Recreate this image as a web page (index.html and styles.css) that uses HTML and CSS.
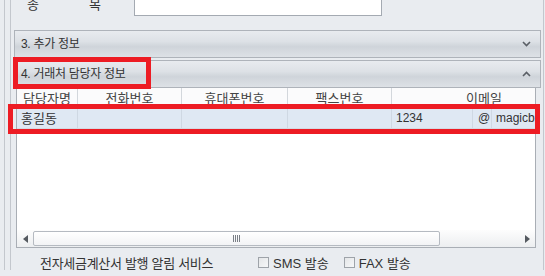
FILE: index.html
```html
<!DOCTYPE html>
<html lang="ko">
<head>
    <meta charset="UTF-8">
    <title>거래처 담당자 정보</title>
    <link rel="stylesheet" href="styles.css">
</head>
<body>
    <div class="window">
        <div class="frame">
            <div class="panel">
                <div class="field-row">
                    <span class="field-label first">종</span>
                    <span class="field-label">목</span>
                    <div class="field-input"></div>
                </div>

                <div class="section">
                    <span class="section-title">3. 추가 정보</span>
                    <svg class="chevron" width="9" height="6" viewBox="0 0 9 6">
                        <path d="M1 1 L4.5 4.5 L8 1" fill="none" stroke="#5a5f66" stroke-width="1.6"/>
                    </svg>
                </div>

                <div class="section open">
                    <span class="section-title">4. 거래처 담당자 정보</span>
                    <svg class="chevron" width="9" height="6" viewBox="0 0 9 6">
                        <path d="M1 5 L4.5 1.5 L8 5" fill="none" stroke="#5a5f66" stroke-width="1.6"/>
                    </svg>
                    <div class="mark mark-title"></div>
                </div>

                <div class="grid">
                    <div class="grid-head">
                        <div class="cell c-name">담당자명</div>
                        <div class="cell c-tel">전화번호</div>
                        <div class="cell c-mobile">휴대폰번호</div>
                        <div class="cell c-fax">팩스번호</div>
                        <div class="cell c-mail">이메일</div>
                    </div>
                    <div class="grid-row">
                        <div class="cell c-name">홍길동</div>
                        <div class="cell c-tel"></div>
                        <div class="cell c-mobile"></div>
                        <div class="cell c-fax"></div>
                        <div class="cell c-mail-id">1234</div>
                        <div class="cell c-at">@</div>
                        <div class="cell c-domain">magicbiz.co.kr</div>
                        <div class="mark mark-row"></div>
                    </div>
                    <div class="grid-body"></div>
                    <div class="hscroll">
                        <span class="arrow left"></span>
                        <div class="thumb"><span class="grip"></span></div>
                        <span class="arrow right"></span>
                    </div>
                </div>

                <div class="notify">
                    <span class="notify-label">전자세금계산서 발행 알림 서비스</span>
                    <label class="check"><span class="box"></span>SMS 발송</label>
                    <label class="check"><span class="box"></span>FAX 발송</label>
                </div>
            </div>
        </div>
    </div>
</body>
</html>
```

FILE: styles.css
```css
body {
    margin: 0;
    font-family: "Liberation Sans", "Noto Sans CJK KR", sans-serif;
    font-size: 12px;
    color: #333;
    background: #e9ecf0;
}
.window {
    width: 545px;
    height: 276px;
    overflow: hidden;
    background: #e9ecf0;
}
.frame {
    margin: 0 1px 0 4px;
    border-left: 1px solid #c3c7cd;
    border-right: 1px solid #c3c7cd;
    padding-left: 5px;
    height: 276px;
}
.panel {
    border-left: 1px solid #c3c7cd;
    padding: 0 2px 0 3px;
    height: 276px;
}

/* 종목 row (partly scrolled off) */
.field-row {
    display: flex;
    align-items: center;
    height: 22px;
    margin-top: -6px;
}
.field-label {
    width: 62px;
    line-height: 14px;
    font-size: 13px;
}
.field-label.first {
    padding-left: 13px;
}
.field-input {
    margin-left: -17px;
    width: 246px;
    height: 20px;
    background: #fff;
    border: 1px solid #a4aab2;
}

/* collapsible headers */
.section {
    position: relative;
    display: flex;
    align-items: center;
    justify-content: space-between;
    height: 26px;
    margin-top: 14px;
    padding: 0 9px 0 6px;
    border: 1px solid #aeb3ba;
    background: linear-gradient(#e8ebef 0%, #dde1e6 40%, #cfd4da 60%, #dde1e6 100%);
}
.section.open {
    margin-top: 2px;
}
.section-title {
    line-height: 14px;
    color: #333;
    letter-spacing: -0.3px;
}
.chevron {
    display: block;
}

/* highlight boxes */
.mark {
    position: absolute;
    border: 5px solid #ed1c24;
    box-sizing: border-box;
}
.mark-title {
    left: -2px;
    top: -4px;
    width: 138px;
    height: 32px;
}
.mark-row {
    left: -9px;
    top: -5px;
    width: 532px;
    height: 30px;
}

/* grid */
.grid {
    margin: 0 5px 0 2px;
    border: 1px solid #a9aeb5;
    border-top: none;
    background: #fff;
}
.grid-head,
.grid-row {
    display: flex;
    overflow: hidden;
}
.grid-head {
    height: 20px;
    border-bottom: 1px solid #d5d8dc;
    background: #fbfbfc;
}
.grid-row {
    position: relative;
    overflow: visible;
    height: 19px;
    border-bottom: 1px solid #d3dae3;
    background: #dfe8f3;
}
.cell {
    flex: none;
    box-sizing: border-box;
    border-right: 1px solid #d3d7dc;
    line-height: 19px;
    white-space: nowrap;
    overflow: hidden;
}
.grid-head .cell {
    text-align: center;
    line-height: 22px;
    font-size: 13px;
    color: #444;
}
.grid-row .cell {
    padding-left: 4px;
    border-right-color: #cfd8e3;
}
.grid-row .c-name {
    font-size: 13px;
}
.c-name { width: 61px; }
.c-tel { width: 104px; }
.c-mobile { width: 106px; }
.c-fax { width: 104px; }
.c-mail { width: 184px; border-right: none; }
.c-mail-id { width: 81px; }
.grid-row .c-at { width: 19px; padding-left: 5px; }
.c-domain { width: 44px; border-right: none; }

.grid-body {
    height: 101px;
}
.hscroll {
    display: flex;
    align-items: center;
    height: 17px;
    background: linear-gradient(#fdfdfd, #eceef0);
}
.arrow {
    width: 0;
    height: 0;
    border-top: 4px solid transparent;
    border-bottom: 4px solid transparent;
}
.arrow.left {
    margin: 0 5px 0 6px;
    border-right: 5px solid #555a60;
}
.arrow.right {
    margin-left: 85px;
    border-left: 5px solid #555a60;
}
.thumb {
    display: flex;
    align-items: center;
    justify-content: center;
    width: 405px;
    height: 13px;
    border: 1px solid #b5bac1;
    border-radius: 2px;
    background: linear-gradient(#ffffff, #f2f3f5);
}
.grip {
    width: 7px;
    height: 7px;
    background: repeating-linear-gradient(90deg, #7a7f86 0 1px, transparent 1px 2px);
}

/* bottom notification options */
.notify {
    display: flex;
    align-items: center;
    height: 28px;
    padding-left: 26px;
    font-size: 13px;
}
.notify-label {
    width: 218px;
    letter-spacing: -0.3px;
}
.check {
    display: flex;
    align-items: center;
    margin-right: 15px;
}
.box {
    width: 9px;
    height: 9px;
    margin-right: 4px;
    border: 1px solid #9ea3a9;
    background: linear-gradient(135deg, #e4e6e8, #f6f7f8);
}
```
